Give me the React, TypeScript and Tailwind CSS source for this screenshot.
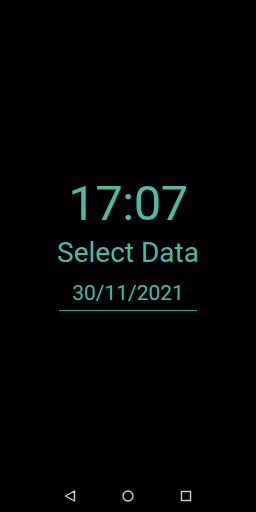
export default function App() {
  return (
    <div className="w-[256px] h-[512px] bg-black flex flex-col font-['Roboto',sans-serif] text-[#4dbba3]">
      <div className="flex-1 flex flex-col items-center pt-[176px]">
        <div className="text-[49px] leading-[56px] tracking-[-0.5px]">17:07</div>
        <div className="text-[28px] leading-[32px] mt-[5px]">Select Data</div>
        <div className="mt-[11px] w-[138px] border-b-[1.5px] border-[#3aa58e] text-center text-[21px] leading-[26px] pb-[4px]">
          30/11/2021
        </div>
      </div>
      <div className="h-[30px] flex items-center justify-center gap-[44px] pb-[2px]">
        <svg width="14" height="14" viewBox="0 0 14 14" fill="none" stroke="#d0d0d0" strokeWidth="1.4" strokeLinejoin="round">
          <path d="M11.5 2 L2.5 7 L11.5 12 Z" />
        </svg>
        <svg width="14" height="14" viewBox="0 0 14 14" fill="none" stroke="#d0d0d0" strokeWidth="1.4">
          <circle cx="7" cy="7" r="5" />
        </svg>
        <svg width="14" height="14" viewBox="0 0 14 14" fill="none" stroke="#d0d0d0" strokeWidth="1.4">
          <rect x="2.5" y="2.5" width="9" height="9" />
        </svg>
      </div>
    </div>
  );
}
